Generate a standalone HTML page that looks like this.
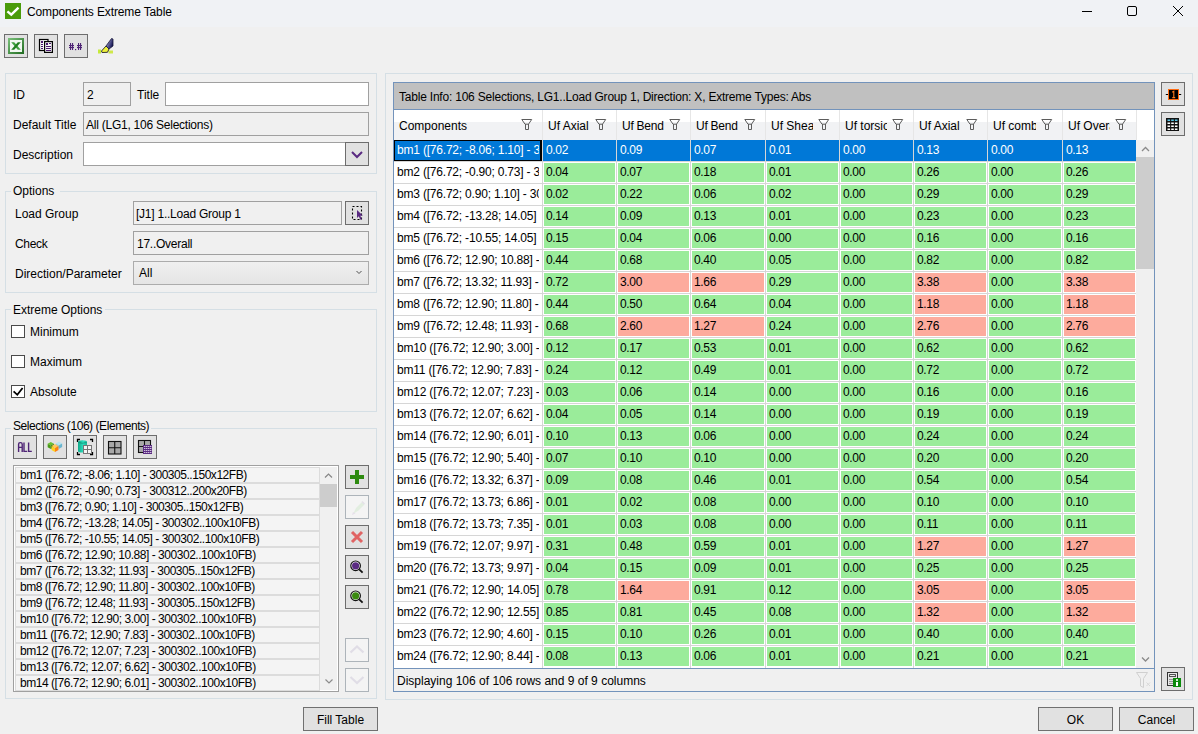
<!DOCTYPE html>
<html><head><meta charset="utf-8"><style>
html,body{margin:0;padding:0;background:#f0f0f0}
body{width:1198px;height:734px;overflow:hidden;position:relative;background:#f0f0f0;font-family:"Liberation Sans",sans-serif;font-size:12px;color:#000}
body>div,body>svg{position:absolute}
.t{white-space:nowrap;line-height:14px;height:14px}
</style></head><body>
<div style="left:0px;top:0px;width:1198px;height:27px;background:#f0f2f5"></div>
<svg style="left:5px;top:3px" width="16" height="16"><rect width="16" height="16" fill="#4a9b0b"/><path d="M2.4 8.3 L6.3 11.7 L13.5 4.6" stroke="#fff" stroke-width="2.4" fill="none"/></svg>
<div class="t" style="left:27px;top:5px;letter-spacing:-0.13px;">Components Extreme Table</div>
<svg style="left:1076px;top:0px" width="122" height="27"><path d="M6 11.5 H16" stroke="#000" stroke-width="1"/><rect x="51.5" y="6.5" width="9" height="9" rx="1.5" fill="none" stroke="#000" stroke-width="1"/><path d="M97 6 L107 16 M107 6 L97 16" stroke="#000" stroke-width="1"/></svg>
<div style="left:4px;top:34px;width:24px;height:24px;background:#e1e1e1;border:1px solid #6d6d6d;box-sizing:border-box"></div>
<div style="left:34px;top:34px;width:24px;height:24px;background:#e1e1e1;border:1px solid #6d6d6d;box-sizing:border-box"></div>
<div style="left:64px;top:34px;width:24px;height:24px;background:#e1e1e1;border:1px solid #6d6d6d;box-sizing:border-box"></div>
<svg style="left:8px;top:38px" width="16" height="16"><defs><linearGradient id="xg" x1="0" y1="0" x2="1" y2="1"><stop offset="0" stop-color="#7cc27c"/><stop offset="1" stop-color="#1f6a1f"/></linearGradient></defs><rect x="0" y="0" width="16" height="16" fill="url(#xg)"/><rect x="2" y="2" width="12" height="12" fill="#f2f8f2"/><path d="M3.2 4.2H6.2L12.8 11.8H9.8Z" fill="#3fa03f"/><path d="M9.8 4.2H12.8L6.2 11.8H3.2Z" fill="#1f7f1f"/></svg>
<svg style="left:36px;top:36px" width="20" height="20"><rect x="3.5" y="3.5" width="8.5" height="11" fill="#f4f4f4" stroke="#000" stroke-width="1.2"/><rect x="8.6" y="5.6" width="7.8" height="10.8" fill="#f4f4f4" stroke="#000" stroke-width="1.2"/><path d="M5 5h2v2h-2z M10 7h2v2h-2z" fill="#4b1a6e"/><path d="M5 8.5h2M5 10.5h2M5 12.5h2M13 7.5h2M10 10.5h5M10 12.5h5M10 14.5h5" stroke="#4b1a6e" stroke-width="1"/></svg>
<svg style="left:66px;top:40px" width="20" height="14" fill="#4e2475"><rect x="4" y="3" width="1.1" height="7"/><rect x="6" y="3" width="1.1" height="7"/><rect x="3" y="5" width="5" height="1.1"/><rect x="3" y="7" width="5" height="1.1"/><rect x="9" y="9" width="1.2" height="1.2"/><rect x="12" y="3" width="1.1" height="7"/><rect x="14" y="3" width="1.1" height="7"/><rect x="11" y="5" width="5" height="1.1"/><rect x="11" y="7" width="5" height="1.1"/></svg>
<svg style="left:95px;top:36px" width="20" height="20"><defs><linearGradient id="hg" x1="0" y1="0" x2="1" y2="0.6"><stop offset="0" stop-color="#b8b8e8"/><stop offset="1" stop-color="#101050"/></linearGradient></defs><rect x="3" y="13.5" width="3" height="4" fill="#c6ea3a"/><rect x="13.5" y="14.5" width="4.5" height="3" fill="#cfe84a"/><path d="M7 16.5L6.5 15L11 10L14 13L12.5 16.3Z" fill="#eef03a" stroke="#222" stroke-width="0.9"/><path d="M11 10L16.5 2.5L18 3L18 10L14 13Z" fill="url(#hg)" stroke="#1a1a3a" stroke-width="0.8"/></svg>
<div style="left:5px;top:73px;width:372px;height:101px;border:1px solid #d5dfe5;box-sizing:border-box"></div>
<div style="left:5px;top:191px;width:372px;height:102px;border:1px solid #d5dfe5;box-sizing:border-box"></div>
<div style="left:5px;top:309px;width:372px;height:103px;border:1px solid #d5dfe5;box-sizing:border-box"></div>
<div style="left:5px;top:428px;width:372px;height:271px;border:1px solid #d5dfe5;box-sizing:border-box"></div>
<div style="left:11px;top:181px;width:49px;height:16px;background:#f0f0f0"></div>
<div class="t" style="left:13px;top:184px;">Options</div>
<div style="left:11px;top:300px;width:94px;height:16px;background:#f0f0f0"></div>
<div class="t" style="left:13px;top:303px;">Extreme Options</div>
<div style="left:11px;top:416px;width:140px;height:16px;background:#f0f0f0"></div>
<div class="t" style="left:13px;top:419px;letter-spacing:-0.44px;">Selections (106) (Elements)</div>
<div class="t" style="left:13px;top:88px;">ID</div>
<div style="left:83px;top:82px;width:48px;height:24px;background:#f0f0f0;border:1px solid #a0a0a0;box-sizing:border-box"></div>
<div class="t" style="left:87px;top:88px;">2</div>
<div class="t" style="left:137px;top:88px;">Title</div>
<div style="left:165px;top:82px;width:204px;height:24px;background:#fff;border:1px solid #a0a0a0;box-sizing:border-box"></div>
<div class="t" style="left:13px;top:118px;">Default Title</div>
<div style="left:83px;top:112px;width:286px;height:24px;background:#f0f0f0;border:1px solid #a0a0a0;box-sizing:border-box"></div>
<div class="t" style="left:86px;top:118px;letter-spacing:-0.24px;">All (LG1, 106 Selections)</div>
<div class="t" style="left:13px;top:148px;">Description</div>
<div style="left:83px;top:142px;width:286px;height:24px;background:#fff;border:1px solid #a0a0a0;box-sizing:border-box"></div>
<div style="left:345px;top:142px;width:24px;height:24px;background:#e1e1e1;border:1px solid #6d6d6d;box-sizing:border-box"></div>
<svg style="left:345px;top:142px" width="24" height="24"><path d="M7 10 L12 15 L17 10" stroke="#5a2a82" stroke-width="2" fill="none"/></svg>
<div class="t" style="left:15px;top:207px;">Load Group</div>
<div style="left:133px;top:201px;width:209px;height:24px;background:#f0f0f0;border:1px solid #a0a0a0;box-sizing:border-box"></div>
<div class="t" style="left:136px;top:207px;letter-spacing:-0.24px;">[J1] 1..Load Group 1</div>
<div style="left:345px;top:201px;width:24px;height:24px;background:#e1e1e1;border:1px solid #6d6d6d;box-sizing:border-box"></div>
<svg style="left:345px;top:201px" width="24" height="24"><rect x="7.5" y="5.5" width="9" height="13" fill="none" stroke="#000" stroke-width="1.1" stroke-dasharray="2 2"/><path d="M12 9L12 17L13.8 15.3L15.3 18.8L16.8 18L15.3 14.8L17.8 14.5Z" fill="#5a2a82"/></svg>
<div class="t" style="left:15px;top:237px;letter-spacing:-0.3px;">Check</div>
<div style="left:133px;top:231px;width:236px;height:24px;background:#f0f0f0;border:1px solid #a0a0a0;box-sizing:border-box"></div>
<div class="t" style="left:137px;top:237px;letter-spacing:-0.25px;">17..Overall</div>
<div class="t" style="left:15px;top:267px;">Direction/Parameter</div>
<div style="left:133px;top:261px;width:236px;height:24px;background:linear-gradient(#f0f0f0,#e5e5e5);border:1px solid #acacac;box-sizing:border-box"></div>
<div class="t" style="left:139px;top:266px;">All</div>
<svg style="left:353px;top:268px" width="10" height="8"><path d="M3.5 3 L6 5.5 L8.5 3" stroke="#505050" stroke-width="1" fill="none"/></svg>
<div style="left:11px;top:325px;width:14px;height:13px;background:#fff;border:1px solid #4a4a4a;box-sizing:border-box"></div>
<div class="t" style="left:30px;top:325px;">Minimum</div>
<div style="left:11px;top:355px;width:14px;height:13px;background:#fff;border:1px solid #4a4a4a;box-sizing:border-box"></div>
<div class="t" style="left:30px;top:355px;">Maximum</div>
<div style="left:11px;top:385px;width:14px;height:13px;background:#fff;border:1px solid #4a4a4a;box-sizing:border-box"></div>
<svg style="left:11px;top:385px" width="14" height="13"><path d="M2.6 6.4 L6.3 9.8 L11.6 3" stroke="#000" stroke-width="1.8" fill="none"/></svg>
<div class="t" style="left:30px;top:385px;">Absolute</div>
<div style="left:13px;top:435px;width:24px;height:24px;background:#e1e1e1;border:1px solid #6d6d6d;box-sizing:border-box"></div>
<div style="left:43px;top:435px;width:24px;height:24px;background:#e1e1e1;border:1px solid #6d6d6d;box-sizing:border-box"></div>
<div style="left:73px;top:435px;width:24px;height:24px;background:#e1e1e1;border:1px solid #6d6d6d;box-sizing:border-box"></div>
<div style="left:103px;top:435px;width:24px;height:24px;background:#e1e1e1;border:1px solid #6d6d6d;box-sizing:border-box"></div>
<div style="left:133px;top:435px;width:24px;height:24px;background:#e1e1e1;border:1px solid #6d6d6d;box-sizing:border-box"></div>
<svg style="left:13px;top:435px" width="24" height="24"><path d="M5.6 17V9.2Q5.6 7.6 7.2 7.6H7.6Q9.2 7.6 9.2 9.2V17M5.6 12.4H9.2M11 7.5V16.4H14.2M15.6 7.5V16.4H18.8" fill="none" stroke="#4e2475" stroke-width="1.4"/></svg>
<svg style="left:43px;top:435px" width="24" height="24"><polygon points="7.80,6.90 10.93,8.70 7.80,10.50 4.67,8.70" fill="#6cc030"/><polygon points="4.67,8.70 7.80,10.50 7.80,14.10 4.67,12.30" fill="#4a9a18"/><polygon points="7.80,10.50 10.93,8.70 10.93,12.30 7.80,14.10" fill="#2f7a10"/><polygon points="16.00,6.60 19.13,8.40 16.00,10.20 12.87,8.40" fill="#b8e4f0"/><polygon points="12.87,8.40 16.00,10.20 16.00,13.80 12.87,12.00" fill="#90cce0"/><polygon points="16.00,10.20 19.13,8.40 19.13,12.00 16.00,13.80" fill="#6ab6d0"/><polygon points="12.00,9.00 15.48,11.00 12.00,13.00 8.52,11.00" fill="#ffc860"/><polygon points="8.52,11.00 12.00,13.00 12.00,17.00 8.52,15.00" fill="#ffd020"/><polygon points="12.00,13.00 15.48,11.00 15.48,15.00 12.00,17.00" fill="#ff8010"/></svg>
<svg style="left:73px;top:435px" width="24" height="24"><path d="M4.5 7V4.5H7M17 4.5H19.5V7M4.5 17V19.5H7M17 19.5H19.5V17" fill="none" stroke="#000" stroke-width="1.3"/><defs><linearGradient id="cyl" x1="0" x2="1"><stop offset="0" stop-color="#10a888"/><stop offset="0.6" stop-color="#30e0c0"/><stop offset="1" stop-color="#18b898"/></linearGradient></defs><path d="M5 7Q5 5.3 9.5 5.3Q14 5.3 14 7V16Q14 17.5 9.5 17.5Q5 17.5 5 16Z" fill="url(#cyl)"/><path d="M5.5 7.5Q9.5 9 13.5 7.5" stroke="#0a7a60" stroke-width="0.6" fill="none"/><rect x="10.5" y="10.5" width="8" height="8" fill="#f4f4f4" stroke="#777" stroke-width="1"/><path d="M14.5 10.5V18.5M10.5 14.5H18.5" stroke="#777" stroke-width="1"/></svg>
<svg style="left:103px;top:435px" width="24" height="24"><rect x="5.5" y="6.5" width="12.5" height="12.5" fill="#a8a8a8" stroke="#111" stroke-width="1.1"/><path d="M11.75 6.5V19M5.5 12.75H18" stroke="#111" stroke-width="1.1"/></svg>
<svg style="left:133px;top:435px" width="24" height="24"><rect x="5.5" y="5.5" width="12" height="12" fill="#a8a8a8" stroke="#111" stroke-width="1.1"/><path d="M11.5 5.5V17.5M5.5 11.5H17.5" stroke="#111" stroke-width="1.1"/><rect x="10" y="10" width="9" height="9" fill="#5a2a82"/><path d="M11.3 11.5h1M13.3 11.5h1M15.3 11.5h1M17.3 11.5h1M11.3 13.5h1M13.3 13.5h1M15.3 13.5h1M17.3 13.5h1M11.3 15.5h1M13.3 15.5h1M15.3 15.5h1M17.3 15.5h1M11.3 17.5h1M13.3 17.5h1M15.3 17.5h1M17.3 17.5h1" stroke="#fff" stroke-width="1"/></svg>
<div style="left:13px;top:465px;width:326px;height:227px;background:#fff;border:1px solid #a0a0a0;box-sizing:border-box"></div>
<div style="left:15px;top:467px;width:305px;height:16px;background:#f4f4f4;border:1px solid #dcdcdc;box-sizing:border-box"></div>
<div class="t" style="left:20px;top:468px;letter-spacing:-0.46px;">bm1 ([76.72; -8.06; 1.10] - 300305..150x12FB)</div>
<div style="left:15px;top:483px;width:305px;height:16px;background:#f4f4f4;border:1px solid #dcdcdc;box-sizing:border-box"></div>
<div class="t" style="left:20px;top:484px;letter-spacing:-0.46px;">bm2 ([76.72; -0.90; 0.73] - 300312..200x20FB)</div>
<div style="left:15px;top:499px;width:305px;height:16px;background:#f4f4f4;border:1px solid #dcdcdc;box-sizing:border-box"></div>
<div class="t" style="left:20px;top:500px;letter-spacing:-0.46px;">bm3 ([76.72; 0.90; 1.10] - 300305..150x12FB)</div>
<div style="left:15px;top:515px;width:305px;height:16px;background:#f4f4f4;border:1px solid #dcdcdc;box-sizing:border-box"></div>
<div class="t" style="left:20px;top:516px;letter-spacing:-0.46px;">bm4 ([76.72; -13.28; 14.05] - 300302..100x10FB)</div>
<div style="left:15px;top:531px;width:305px;height:16px;background:#f4f4f4;border:1px solid #dcdcdc;box-sizing:border-box"></div>
<div class="t" style="left:20px;top:532px;letter-spacing:-0.46px;">bm5 ([76.72; -10.55; 14.05] - 300302..100x10FB)</div>
<div style="left:15px;top:547px;width:305px;height:16px;background:#f4f4f4;border:1px solid #dcdcdc;box-sizing:border-box"></div>
<div class="t" style="left:20px;top:548px;letter-spacing:-0.46px;">bm6 ([76.72; 12.90; 10.88] - 300302..100x10FB)</div>
<div style="left:15px;top:563px;width:305px;height:16px;background:#f4f4f4;border:1px solid #dcdcdc;box-sizing:border-box"></div>
<div class="t" style="left:20px;top:564px;letter-spacing:-0.46px;">bm7 ([76.72; 13.32; 11.93] - 300305..150x12FB)</div>
<div style="left:15px;top:579px;width:305px;height:16px;background:#f4f4f4;border:1px solid #dcdcdc;box-sizing:border-box"></div>
<div class="t" style="left:20px;top:580px;letter-spacing:-0.46px;">bm8 ([76.72; 12.90; 11.80] - 300302..100x10FB)</div>
<div style="left:15px;top:595px;width:305px;height:16px;background:#f4f4f4;border:1px solid #dcdcdc;box-sizing:border-box"></div>
<div class="t" style="left:20px;top:596px;letter-spacing:-0.46px;">bm9 ([76.72; 12.48; 11.93] - 300305..150x12FB)</div>
<div style="left:15px;top:611px;width:305px;height:16px;background:#f4f4f4;border:1px solid #dcdcdc;box-sizing:border-box"></div>
<div class="t" style="left:20px;top:612px;letter-spacing:-0.46px;">bm10 ([76.72; 12.90; 3.00] - 300302..100x10FB)</div>
<div style="left:15px;top:627px;width:305px;height:16px;background:#f4f4f4;border:1px solid #dcdcdc;box-sizing:border-box"></div>
<div class="t" style="left:20px;top:628px;letter-spacing:-0.46px;">bm11 ([76.72; 12.90; 7.83] - 300302..100x10FB)</div>
<div style="left:15px;top:643px;width:305px;height:16px;background:#f4f4f4;border:1px solid #dcdcdc;box-sizing:border-box"></div>
<div class="t" style="left:20px;top:644px;letter-spacing:-0.46px;">bm12 ([76.72; 12.07; 7.23] - 300302..100x10FB)</div>
<div style="left:15px;top:659px;width:305px;height:16px;background:#f4f4f4;border:1px solid #dcdcdc;box-sizing:border-box"></div>
<div class="t" style="left:20px;top:660px;letter-spacing:-0.46px;">bm13 ([76.72; 12.07; 6.62] - 300302..100x10FB)</div>
<div style="left:15px;top:675px;width:305px;height:16px;background:#f4f4f4;border:1px solid #dcdcdc;box-sizing:border-box"></div>
<div class="t" style="left:20px;top:676px;letter-spacing:-0.46px;">bm14 ([76.72; 12.90; 6.01] - 300302..100x10FB)</div>
<div style="left:320px;top:467px;width:17px;height:223px;background:#f0f0f0"></div>
<div style="left:320px;top:484px;width:17px;height:23px;background:#cdcdcd"></div>
<svg style="left:320px;top:466px" width="17" height="17"><path d="M5 11.5 L8.5 8 L12 11.5" stroke="#868686" stroke-width="1.2" fill="none"/></svg>
<svg style="left:320px;top:673px" width="17" height="17"><path d="M5.5 6.5 L9 10 L12.5 6.5" stroke="#8c8c8c" stroke-width="1.2" fill="none"/></svg>
<div style="left:345px;top:465px;width:24px;height:24px;background:#e1e1e1;border:1px solid #6d6d6d;box-sizing:border-box"></div>
<svg style="left:345px;top:465px" width="24" height="24"><path d="M12 5V19M5 11.9H19" stroke="#2d8a0f" stroke-width="4"/></svg>
<div style="left:345px;top:495px;width:24px;height:24px;background:#f4f4f4;border:1px solid #adb4ba;box-sizing:border-box"></div>
<svg style="left:345px;top:495px" width="24" height="24"><path d="M8 19L11 13L17 7L19.5 9.5L13.5 15.5Z" fill="#e2eee0"/><path d="M7 20L8 17L10.5 18.5Z" fill="#e6e0ea"/><path d="M17 6.5L19.5 9" stroke="#e4e0e8" stroke-width="1.5"/></svg>
<div style="left:345px;top:525px;width:24px;height:24px;background:#e1e1e1;border:1px solid #6d6d6d;box-sizing:border-box"></div>
<svg style="left:345px;top:525px" width="24" height="24"><path d="M7 7L17 17M17 7L7 17" stroke="#e06464" stroke-width="3"/></svg>
<div style="left:345px;top:555px;width:24px;height:24px;background:#e1e1e1;border:1px solid #6d6d6d;box-sizing:border-box"></div>
<svg style="left:345px;top:555px" width="24" height="24"><circle cx="10.6" cy="10.8" r="4.8" fill="#fff" stroke="#111" stroke-width="1.2"/><circle cx="10.6" cy="10.8" r="3.6" fill="#5a2a82"/><path d="M14.2 14.4L17.6 17.6" stroke="#111" stroke-width="1.8"/></svg>
<div style="left:345px;top:585px;width:24px;height:24px;background:#e1e1e1;border:1px solid #6d6d6d;box-sizing:border-box"></div>
<svg style="left:345px;top:585px" width="24" height="24"><circle cx="10.6" cy="10.8" r="4.8" fill="#fff" stroke="#111" stroke-width="1.2"/><circle cx="10.6" cy="10.8" r="3.6" fill="#3a8a10"/><path d="M14.2 14.4L17.6 17.6" stroke="#111" stroke-width="1.8"/></svg>
<div style="left:345px;top:638px;width:24px;height:24px;background:#f4f4f4;border:1px solid #adb4ba;box-sizing:border-box"></div>
<svg style="left:345px;top:638px" width="24" height="24"><path d="M5.5 14.5L12 8.5L18.5 14.5" stroke="#e0dde6" stroke-width="2.2" fill="none"/></svg>
<div style="left:345px;top:668px;width:24px;height:24px;background:#f4f4f4;border:1px solid #adb4ba;box-sizing:border-box"></div>
<svg style="left:345px;top:668px" width="24" height="24"><path d="M5.5 9L12 15L18.5 9" stroke="#e0dde6" stroke-width="2.2" fill="none"/></svg>
<div style="left:303px;top:707px;width:75px;height:24px;background:#e1e1e1;border:1px solid #707070;box-sizing:border-box"></div>
<div class="t" style="left:303px;top:713px;width:75px;text-align:center;">Fill Table</div>
<div style="left:385px;top:73px;width:808px;height:627px;border:1px solid #d5dfe5;box-sizing:border-box"></div>
<div style="left:393px;top:82px;width:762px;height:610px;background:#fff;border:1px solid #7393bb;box-sizing:border-box"></div>
<div style="left:394px;top:83px;width:760px;height:26px;background:#c0c0c0"></div>
<div style="left:394px;top:109px;width:760px;height:1px;background:#7393bb"></div>
<div class="t" style="left:399px;top:90px;letter-spacing:-0.21px;">Table Info: 106 Selections, LG1..Load Group 1, Direction: X, Extreme Types: Abs</div>
<div style="left:394px;top:110px;width:743px;height:12px;background:#fff"></div>
<div style="left:394px;top:122px;width:743px;height:18px;background:#f1f2f4"></div>
<div class="t" style="left:399px;top:119px;width:117px;overflow:hidden;">Components</div>
<svg style="left:521px;top:119px" width="12" height="12"><path d="M0.8 0.5H10.7L7.5 5.2H4Z" fill="none" stroke="#5c5c5c" stroke-width="1"/><path d="M4.5 5V10.5H7.5V5" fill="none" stroke="#5c5c5c" stroke-width="1"/></svg>
<div style="left:542px;top:110px;width:1px;height:30px;background:#e6e6e6"></div>
<div class="t" style="left:548px;top:119px;width:42px;overflow:hidden;">Uf Axial</div>
<svg style="left:595px;top:119px" width="12" height="12"><path d="M0.8 0.5H10.7L7.5 5.2H4Z" fill="none" stroke="#5c5c5c" stroke-width="1"/><path d="M4.5 5V10.5H7.5V5" fill="none" stroke="#5c5c5c" stroke-width="1"/></svg>
<div style="left:616px;top:110px;width:1px;height:30px;background:#e6e6e6"></div>
<div class="t" style="left:622px;top:119px;width:42px;overflow:hidden;letter-spacing:-0.25px;">Uf Bend</div>
<svg style="left:669px;top:119px" width="12" height="12"><path d="M0.8 0.5H10.7L7.5 5.2H4Z" fill="none" stroke="#5c5c5c" stroke-width="1"/><path d="M4.5 5V10.5H7.5V5" fill="none" stroke="#5c5c5c" stroke-width="1"/></svg>
<div style="left:690px;top:110px;width:1px;height:30px;background:#e6e6e6"></div>
<div class="t" style="left:696px;top:119px;width:43px;overflow:hidden;letter-spacing:-0.25px;">Uf Bend</div>
<svg style="left:744px;top:119px" width="12" height="12"><path d="M0.8 0.5H10.7L7.5 5.2H4Z" fill="none" stroke="#5c5c5c" stroke-width="1"/><path d="M4.5 5V10.5H7.5V5" fill="none" stroke="#5c5c5c" stroke-width="1"/></svg>
<div style="left:765px;top:110px;width:1px;height:30px;background:#e6e6e6"></div>
<div class="t" style="left:771px;top:119px;width:42px;overflow:hidden;">Uf Shear</div>
<svg style="left:818px;top:119px" width="12" height="12"><path d="M0.8 0.5H10.7L7.5 5.2H4Z" fill="none" stroke="#5c5c5c" stroke-width="1"/><path d="M4.5 5V10.5H7.5V5" fill="none" stroke="#5c5c5c" stroke-width="1"/></svg>
<div style="left:839px;top:110px;width:1px;height:30px;background:#e6e6e6"></div>
<div class="t" style="left:845px;top:119px;width:42px;overflow:hidden;">Uf torsion</div>
<svg style="left:892px;top:119px" width="12" height="12"><path d="M0.8 0.5H10.7L7.5 5.2H4Z" fill="none" stroke="#5c5c5c" stroke-width="1"/><path d="M4.5 5V10.5H7.5V5" fill="none" stroke="#5c5c5c" stroke-width="1"/></svg>
<div style="left:913px;top:110px;width:1px;height:30px;background:#e6e6e6"></div>
<div class="t" style="left:919px;top:119px;width:42px;overflow:hidden;">Uf Axial</div>
<svg style="left:966px;top:119px" width="12" height="12"><path d="M0.8 0.5H10.7L7.5 5.2H4Z" fill="none" stroke="#5c5c5c" stroke-width="1"/><path d="M4.5 5V10.5H7.5V5" fill="none" stroke="#5c5c5c" stroke-width="1"/></svg>
<div style="left:987px;top:110px;width:1px;height:30px;background:#e6e6e6"></div>
<div class="t" style="left:993px;top:119px;width:43px;overflow:hidden;">Uf combined</div>
<svg style="left:1041px;top:119px" width="12" height="12"><path d="M0.8 0.5H10.7L7.5 5.2H4Z" fill="none" stroke="#5c5c5c" stroke-width="1"/><path d="M4.5 5V10.5H7.5V5" fill="none" stroke="#5c5c5c" stroke-width="1"/></svg>
<div style="left:1062px;top:110px;width:1px;height:30px;background:#e6e6e6"></div>
<div class="t" style="left:1068px;top:119px;width:42px;overflow:hidden;">Uf Overall</div>
<svg style="left:1115px;top:119px" width="12" height="12"><path d="M0.8 0.5H10.7L7.5 5.2H4Z" fill="none" stroke="#5c5c5c" stroke-width="1"/><path d="M4.5 5V10.5H7.5V5" fill="none" stroke="#5c5c5c" stroke-width="1"/></svg>
<div style="left:1136px;top:110px;width:1px;height:30px;background:#e6e6e6"></div>
<div style="left:394px;top:140px;width:742px;height:21px;background:#0078d7"></div>
<div style="left:394px;top:140px;width:148px;height:21px;border:1px solid #000;border-right-width:2px;box-sizing:border-box"></div>
<div class="t" style="left:397px;top:143px;width:142px;overflow:hidden;letter-spacing:-0.2px;color:#fff">bm1 ([76.72; -8.06; 1.10] - 300305..150x12FB)</div>
<div class="t" style="left:546px;top:143px;letter-spacing:-0.35px;color:#fff">0.02</div>
<div class="t" style="left:620px;top:143px;letter-spacing:-0.35px;color:#fff">0.09</div>
<div class="t" style="left:694px;top:143px;letter-spacing:-0.35px;color:#fff">0.07</div>
<div class="t" style="left:769px;top:143px;letter-spacing:-0.35px;color:#fff">0.01</div>
<div class="t" style="left:843px;top:143px;letter-spacing:-0.35px;color:#fff">0.00</div>
<div class="t" style="left:917px;top:143px;letter-spacing:-0.35px;color:#fff">0.13</div>
<div class="t" style="left:991px;top:143px;letter-spacing:-0.35px;color:#fff">0.00</div>
<div class="t" style="left:1066px;top:143px;letter-spacing:-0.35px;color:#fff">0.13</div>
<div style="left:394px;top:161px;width:742px;height:1px;background:#d6d6d6"></div>
<div class="t" style="left:397px;top:165px;width:142px;overflow:hidden;letter-spacing:-0.2px;color:#000">bm2 ([76.72; -0.90; 0.73] - 300312..200x20FB)</div>
<div style="left:544px;top:163px;width:71px;height:19px;background:#9aec9a"></div>
<div class="t" style="left:546px;top:165px;letter-spacing:-0.35px;color:#000">0.04</div>
<div style="left:618px;top:163px;width:71px;height:19px;background:#9aec9a"></div>
<div class="t" style="left:620px;top:165px;letter-spacing:-0.35px;color:#000">0.07</div>
<div style="left:692px;top:163px;width:72px;height:19px;background:#9aec9a"></div>
<div class="t" style="left:694px;top:165px;letter-spacing:-0.35px;color:#000">0.18</div>
<div style="left:767px;top:163px;width:71px;height:19px;background:#9aec9a"></div>
<div class="t" style="left:769px;top:165px;letter-spacing:-0.35px;color:#000">0.01</div>
<div style="left:841px;top:163px;width:71px;height:19px;background:#9aec9a"></div>
<div class="t" style="left:843px;top:165px;letter-spacing:-0.35px;color:#000">0.00</div>
<div style="left:915px;top:163px;width:71px;height:19px;background:#9aec9a"></div>
<div class="t" style="left:917px;top:165px;letter-spacing:-0.35px;color:#000">0.26</div>
<div style="left:989px;top:163px;width:72px;height:19px;background:#9aec9a"></div>
<div class="t" style="left:991px;top:165px;letter-spacing:-0.35px;color:#000">0.00</div>
<div style="left:1064px;top:163px;width:71px;height:19px;background:#9aec9a"></div>
<div class="t" style="left:1066px;top:165px;letter-spacing:-0.35px;color:#000">0.26</div>
<div style="left:394px;top:183px;width:742px;height:1px;background:#d6d6d6"></div>
<div class="t" style="left:397px;top:187px;width:142px;overflow:hidden;letter-spacing:-0.2px;color:#000">bm3 ([76.72; 0.90; 1.10] - 300305..150x12FB)</div>
<div style="left:544px;top:185px;width:71px;height:19px;background:#9aec9a"></div>
<div class="t" style="left:546px;top:187px;letter-spacing:-0.35px;color:#000">0.02</div>
<div style="left:618px;top:185px;width:71px;height:19px;background:#9aec9a"></div>
<div class="t" style="left:620px;top:187px;letter-spacing:-0.35px;color:#000">0.22</div>
<div style="left:692px;top:185px;width:72px;height:19px;background:#9aec9a"></div>
<div class="t" style="left:694px;top:187px;letter-spacing:-0.35px;color:#000">0.06</div>
<div style="left:767px;top:185px;width:71px;height:19px;background:#9aec9a"></div>
<div class="t" style="left:769px;top:187px;letter-spacing:-0.35px;color:#000">0.02</div>
<div style="left:841px;top:185px;width:71px;height:19px;background:#9aec9a"></div>
<div class="t" style="left:843px;top:187px;letter-spacing:-0.35px;color:#000">0.00</div>
<div style="left:915px;top:185px;width:71px;height:19px;background:#9aec9a"></div>
<div class="t" style="left:917px;top:187px;letter-spacing:-0.35px;color:#000">0.29</div>
<div style="left:989px;top:185px;width:72px;height:19px;background:#9aec9a"></div>
<div class="t" style="left:991px;top:187px;letter-spacing:-0.35px;color:#000">0.00</div>
<div style="left:1064px;top:185px;width:71px;height:19px;background:#9aec9a"></div>
<div class="t" style="left:1066px;top:187px;letter-spacing:-0.35px;color:#000">0.29</div>
<div style="left:394px;top:205px;width:742px;height:1px;background:#d6d6d6"></div>
<div class="t" style="left:397px;top:209px;width:142px;overflow:hidden;letter-spacing:-0.2px;color:#000">bm4 ([76.72; -13.28; 14.05] - 300302..100x10FB)</div>
<div style="left:544px;top:207px;width:71px;height:19px;background:#9aec9a"></div>
<div class="t" style="left:546px;top:209px;letter-spacing:-0.35px;color:#000">0.14</div>
<div style="left:618px;top:207px;width:71px;height:19px;background:#9aec9a"></div>
<div class="t" style="left:620px;top:209px;letter-spacing:-0.35px;color:#000">0.09</div>
<div style="left:692px;top:207px;width:72px;height:19px;background:#9aec9a"></div>
<div class="t" style="left:694px;top:209px;letter-spacing:-0.35px;color:#000">0.13</div>
<div style="left:767px;top:207px;width:71px;height:19px;background:#9aec9a"></div>
<div class="t" style="left:769px;top:209px;letter-spacing:-0.35px;color:#000">0.01</div>
<div style="left:841px;top:207px;width:71px;height:19px;background:#9aec9a"></div>
<div class="t" style="left:843px;top:209px;letter-spacing:-0.35px;color:#000">0.00</div>
<div style="left:915px;top:207px;width:71px;height:19px;background:#9aec9a"></div>
<div class="t" style="left:917px;top:209px;letter-spacing:-0.35px;color:#000">0.23</div>
<div style="left:989px;top:207px;width:72px;height:19px;background:#9aec9a"></div>
<div class="t" style="left:991px;top:209px;letter-spacing:-0.35px;color:#000">0.00</div>
<div style="left:1064px;top:207px;width:71px;height:19px;background:#9aec9a"></div>
<div class="t" style="left:1066px;top:209px;letter-spacing:-0.35px;color:#000">0.23</div>
<div style="left:394px;top:227px;width:742px;height:1px;background:#d6d6d6"></div>
<div class="t" style="left:397px;top:231px;width:142px;overflow:hidden;letter-spacing:-0.2px;color:#000">bm5 ([76.72; -10.55; 14.05] - 300302..100x10FB)</div>
<div style="left:544px;top:229px;width:71px;height:19px;background:#9aec9a"></div>
<div class="t" style="left:546px;top:231px;letter-spacing:-0.35px;color:#000">0.15</div>
<div style="left:618px;top:229px;width:71px;height:19px;background:#9aec9a"></div>
<div class="t" style="left:620px;top:231px;letter-spacing:-0.35px;color:#000">0.04</div>
<div style="left:692px;top:229px;width:72px;height:19px;background:#9aec9a"></div>
<div class="t" style="left:694px;top:231px;letter-spacing:-0.35px;color:#000">0.06</div>
<div style="left:767px;top:229px;width:71px;height:19px;background:#9aec9a"></div>
<div class="t" style="left:769px;top:231px;letter-spacing:-0.35px;color:#000">0.00</div>
<div style="left:841px;top:229px;width:71px;height:19px;background:#9aec9a"></div>
<div class="t" style="left:843px;top:231px;letter-spacing:-0.35px;color:#000">0.00</div>
<div style="left:915px;top:229px;width:71px;height:19px;background:#9aec9a"></div>
<div class="t" style="left:917px;top:231px;letter-spacing:-0.35px;color:#000">0.16</div>
<div style="left:989px;top:229px;width:72px;height:19px;background:#9aec9a"></div>
<div class="t" style="left:991px;top:231px;letter-spacing:-0.35px;color:#000">0.00</div>
<div style="left:1064px;top:229px;width:71px;height:19px;background:#9aec9a"></div>
<div class="t" style="left:1066px;top:231px;letter-spacing:-0.35px;color:#000">0.16</div>
<div style="left:394px;top:249px;width:742px;height:1px;background:#d6d6d6"></div>
<div class="t" style="left:397px;top:253px;width:142px;overflow:hidden;letter-spacing:-0.2px;color:#000">bm6 ([76.72; 12.90; 10.88] - 300302..100x10FB)</div>
<div style="left:544px;top:251px;width:71px;height:19px;background:#9aec9a"></div>
<div class="t" style="left:546px;top:253px;letter-spacing:-0.35px;color:#000">0.44</div>
<div style="left:618px;top:251px;width:71px;height:19px;background:#9aec9a"></div>
<div class="t" style="left:620px;top:253px;letter-spacing:-0.35px;color:#000">0.68</div>
<div style="left:692px;top:251px;width:72px;height:19px;background:#9aec9a"></div>
<div class="t" style="left:694px;top:253px;letter-spacing:-0.35px;color:#000">0.40</div>
<div style="left:767px;top:251px;width:71px;height:19px;background:#9aec9a"></div>
<div class="t" style="left:769px;top:253px;letter-spacing:-0.35px;color:#000">0.05</div>
<div style="left:841px;top:251px;width:71px;height:19px;background:#9aec9a"></div>
<div class="t" style="left:843px;top:253px;letter-spacing:-0.35px;color:#000">0.00</div>
<div style="left:915px;top:251px;width:71px;height:19px;background:#9aec9a"></div>
<div class="t" style="left:917px;top:253px;letter-spacing:-0.35px;color:#000">0.82</div>
<div style="left:989px;top:251px;width:72px;height:19px;background:#9aec9a"></div>
<div class="t" style="left:991px;top:253px;letter-spacing:-0.35px;color:#000">0.00</div>
<div style="left:1064px;top:251px;width:71px;height:19px;background:#9aec9a"></div>
<div class="t" style="left:1066px;top:253px;letter-spacing:-0.35px;color:#000">0.82</div>
<div style="left:394px;top:271px;width:742px;height:1px;background:#d6d6d6"></div>
<div class="t" style="left:397px;top:275px;width:142px;overflow:hidden;letter-spacing:-0.2px;color:#000">bm7 ([76.72; 13.32; 11.93] - 300305..150x12FB)</div>
<div style="left:544px;top:273px;width:71px;height:19px;background:#9aec9a"></div>
<div class="t" style="left:546px;top:275px;letter-spacing:-0.35px;color:#000">0.72</div>
<div style="left:618px;top:273px;width:71px;height:19px;background:#fdab9d"></div>
<div class="t" style="left:620px;top:275px;letter-spacing:-0.35px;color:#000">3.00</div>
<div style="left:692px;top:273px;width:72px;height:19px;background:#fdab9d"></div>
<div class="t" style="left:694px;top:275px;letter-spacing:-0.35px;color:#000">1.66</div>
<div style="left:767px;top:273px;width:71px;height:19px;background:#9aec9a"></div>
<div class="t" style="left:769px;top:275px;letter-spacing:-0.35px;color:#000">0.29</div>
<div style="left:841px;top:273px;width:71px;height:19px;background:#9aec9a"></div>
<div class="t" style="left:843px;top:275px;letter-spacing:-0.35px;color:#000">0.00</div>
<div style="left:915px;top:273px;width:71px;height:19px;background:#fdab9d"></div>
<div class="t" style="left:917px;top:275px;letter-spacing:-0.35px;color:#000">3.38</div>
<div style="left:989px;top:273px;width:72px;height:19px;background:#9aec9a"></div>
<div class="t" style="left:991px;top:275px;letter-spacing:-0.35px;color:#000">0.00</div>
<div style="left:1064px;top:273px;width:71px;height:19px;background:#fdab9d"></div>
<div class="t" style="left:1066px;top:275px;letter-spacing:-0.35px;color:#000">3.38</div>
<div style="left:394px;top:293px;width:742px;height:1px;background:#d6d6d6"></div>
<div class="t" style="left:397px;top:297px;width:142px;overflow:hidden;letter-spacing:-0.2px;color:#000">bm8 ([76.72; 12.90; 11.80] - 300302..100x10FB)</div>
<div style="left:544px;top:295px;width:71px;height:19px;background:#9aec9a"></div>
<div class="t" style="left:546px;top:297px;letter-spacing:-0.35px;color:#000">0.44</div>
<div style="left:618px;top:295px;width:71px;height:19px;background:#9aec9a"></div>
<div class="t" style="left:620px;top:297px;letter-spacing:-0.35px;color:#000">0.50</div>
<div style="left:692px;top:295px;width:72px;height:19px;background:#9aec9a"></div>
<div class="t" style="left:694px;top:297px;letter-spacing:-0.35px;color:#000">0.64</div>
<div style="left:767px;top:295px;width:71px;height:19px;background:#9aec9a"></div>
<div class="t" style="left:769px;top:297px;letter-spacing:-0.35px;color:#000">0.04</div>
<div style="left:841px;top:295px;width:71px;height:19px;background:#9aec9a"></div>
<div class="t" style="left:843px;top:297px;letter-spacing:-0.35px;color:#000">0.00</div>
<div style="left:915px;top:295px;width:71px;height:19px;background:#fdab9d"></div>
<div class="t" style="left:917px;top:297px;letter-spacing:-0.35px;color:#000">1.18</div>
<div style="left:989px;top:295px;width:72px;height:19px;background:#9aec9a"></div>
<div class="t" style="left:991px;top:297px;letter-spacing:-0.35px;color:#000">0.00</div>
<div style="left:1064px;top:295px;width:71px;height:19px;background:#fdab9d"></div>
<div class="t" style="left:1066px;top:297px;letter-spacing:-0.35px;color:#000">1.18</div>
<div style="left:394px;top:315px;width:742px;height:1px;background:#d6d6d6"></div>
<div class="t" style="left:397px;top:319px;width:142px;overflow:hidden;letter-spacing:-0.2px;color:#000">bm9 ([76.72; 12.48; 11.93] - 300305..150x12FB)</div>
<div style="left:544px;top:317px;width:71px;height:19px;background:#9aec9a"></div>
<div class="t" style="left:546px;top:319px;letter-spacing:-0.35px;color:#000">0.68</div>
<div style="left:618px;top:317px;width:71px;height:19px;background:#fdab9d"></div>
<div class="t" style="left:620px;top:319px;letter-spacing:-0.35px;color:#000">2.60</div>
<div style="left:692px;top:317px;width:72px;height:19px;background:#fdab9d"></div>
<div class="t" style="left:694px;top:319px;letter-spacing:-0.35px;color:#000">1.27</div>
<div style="left:767px;top:317px;width:71px;height:19px;background:#9aec9a"></div>
<div class="t" style="left:769px;top:319px;letter-spacing:-0.35px;color:#000">0.24</div>
<div style="left:841px;top:317px;width:71px;height:19px;background:#9aec9a"></div>
<div class="t" style="left:843px;top:319px;letter-spacing:-0.35px;color:#000">0.00</div>
<div style="left:915px;top:317px;width:71px;height:19px;background:#fdab9d"></div>
<div class="t" style="left:917px;top:319px;letter-spacing:-0.35px;color:#000">2.76</div>
<div style="left:989px;top:317px;width:72px;height:19px;background:#9aec9a"></div>
<div class="t" style="left:991px;top:319px;letter-spacing:-0.35px;color:#000">0.00</div>
<div style="left:1064px;top:317px;width:71px;height:19px;background:#fdab9d"></div>
<div class="t" style="left:1066px;top:319px;letter-spacing:-0.35px;color:#000">2.76</div>
<div style="left:394px;top:337px;width:742px;height:1px;background:#d6d6d6"></div>
<div class="t" style="left:397px;top:341px;width:142px;overflow:hidden;letter-spacing:-0.2px;color:#000">bm10 ([76.72; 12.90; 3.00] - 300302..100x10FB)</div>
<div style="left:544px;top:339px;width:71px;height:19px;background:#9aec9a"></div>
<div class="t" style="left:546px;top:341px;letter-spacing:-0.35px;color:#000">0.12</div>
<div style="left:618px;top:339px;width:71px;height:19px;background:#9aec9a"></div>
<div class="t" style="left:620px;top:341px;letter-spacing:-0.35px;color:#000">0.17</div>
<div style="left:692px;top:339px;width:72px;height:19px;background:#9aec9a"></div>
<div class="t" style="left:694px;top:341px;letter-spacing:-0.35px;color:#000">0.53</div>
<div style="left:767px;top:339px;width:71px;height:19px;background:#9aec9a"></div>
<div class="t" style="left:769px;top:341px;letter-spacing:-0.35px;color:#000">0.01</div>
<div style="left:841px;top:339px;width:71px;height:19px;background:#9aec9a"></div>
<div class="t" style="left:843px;top:341px;letter-spacing:-0.35px;color:#000">0.00</div>
<div style="left:915px;top:339px;width:71px;height:19px;background:#9aec9a"></div>
<div class="t" style="left:917px;top:341px;letter-spacing:-0.35px;color:#000">0.62</div>
<div style="left:989px;top:339px;width:72px;height:19px;background:#9aec9a"></div>
<div class="t" style="left:991px;top:341px;letter-spacing:-0.35px;color:#000">0.00</div>
<div style="left:1064px;top:339px;width:71px;height:19px;background:#9aec9a"></div>
<div class="t" style="left:1066px;top:341px;letter-spacing:-0.35px;color:#000">0.62</div>
<div style="left:394px;top:359px;width:742px;height:1px;background:#d6d6d6"></div>
<div class="t" style="left:397px;top:363px;width:142px;overflow:hidden;letter-spacing:-0.2px;color:#000">bm11 ([76.72; 12.90; 7.83] - 300302..100x10FB)</div>
<div style="left:544px;top:361px;width:71px;height:19px;background:#9aec9a"></div>
<div class="t" style="left:546px;top:363px;letter-spacing:-0.35px;color:#000">0.24</div>
<div style="left:618px;top:361px;width:71px;height:19px;background:#9aec9a"></div>
<div class="t" style="left:620px;top:363px;letter-spacing:-0.35px;color:#000">0.12</div>
<div style="left:692px;top:361px;width:72px;height:19px;background:#9aec9a"></div>
<div class="t" style="left:694px;top:363px;letter-spacing:-0.35px;color:#000">0.49</div>
<div style="left:767px;top:361px;width:71px;height:19px;background:#9aec9a"></div>
<div class="t" style="left:769px;top:363px;letter-spacing:-0.35px;color:#000">0.01</div>
<div style="left:841px;top:361px;width:71px;height:19px;background:#9aec9a"></div>
<div class="t" style="left:843px;top:363px;letter-spacing:-0.35px;color:#000">0.00</div>
<div style="left:915px;top:361px;width:71px;height:19px;background:#9aec9a"></div>
<div class="t" style="left:917px;top:363px;letter-spacing:-0.35px;color:#000">0.72</div>
<div style="left:989px;top:361px;width:72px;height:19px;background:#9aec9a"></div>
<div class="t" style="left:991px;top:363px;letter-spacing:-0.35px;color:#000">0.00</div>
<div style="left:1064px;top:361px;width:71px;height:19px;background:#9aec9a"></div>
<div class="t" style="left:1066px;top:363px;letter-spacing:-0.35px;color:#000">0.72</div>
<div style="left:394px;top:381px;width:742px;height:1px;background:#d6d6d6"></div>
<div class="t" style="left:397px;top:385px;width:142px;overflow:hidden;letter-spacing:-0.2px;color:#000">bm12 ([76.72; 12.07; 7.23] - 300302..100x10FB)</div>
<div style="left:544px;top:383px;width:71px;height:19px;background:#9aec9a"></div>
<div class="t" style="left:546px;top:385px;letter-spacing:-0.35px;color:#000">0.03</div>
<div style="left:618px;top:383px;width:71px;height:19px;background:#9aec9a"></div>
<div class="t" style="left:620px;top:385px;letter-spacing:-0.35px;color:#000">0.06</div>
<div style="left:692px;top:383px;width:72px;height:19px;background:#9aec9a"></div>
<div class="t" style="left:694px;top:385px;letter-spacing:-0.35px;color:#000">0.14</div>
<div style="left:767px;top:383px;width:71px;height:19px;background:#9aec9a"></div>
<div class="t" style="left:769px;top:385px;letter-spacing:-0.35px;color:#000">0.00</div>
<div style="left:841px;top:383px;width:71px;height:19px;background:#9aec9a"></div>
<div class="t" style="left:843px;top:385px;letter-spacing:-0.35px;color:#000">0.00</div>
<div style="left:915px;top:383px;width:71px;height:19px;background:#9aec9a"></div>
<div class="t" style="left:917px;top:385px;letter-spacing:-0.35px;color:#000">0.16</div>
<div style="left:989px;top:383px;width:72px;height:19px;background:#9aec9a"></div>
<div class="t" style="left:991px;top:385px;letter-spacing:-0.35px;color:#000">0.00</div>
<div style="left:1064px;top:383px;width:71px;height:19px;background:#9aec9a"></div>
<div class="t" style="left:1066px;top:385px;letter-spacing:-0.35px;color:#000">0.16</div>
<div style="left:394px;top:403px;width:742px;height:1px;background:#d6d6d6"></div>
<div class="t" style="left:397px;top:407px;width:142px;overflow:hidden;letter-spacing:-0.2px;color:#000">bm13 ([76.72; 12.07; 6.62] - 300302..100x10FB)</div>
<div style="left:544px;top:405px;width:71px;height:19px;background:#9aec9a"></div>
<div class="t" style="left:546px;top:407px;letter-spacing:-0.35px;color:#000">0.04</div>
<div style="left:618px;top:405px;width:71px;height:19px;background:#9aec9a"></div>
<div class="t" style="left:620px;top:407px;letter-spacing:-0.35px;color:#000">0.05</div>
<div style="left:692px;top:405px;width:72px;height:19px;background:#9aec9a"></div>
<div class="t" style="left:694px;top:407px;letter-spacing:-0.35px;color:#000">0.14</div>
<div style="left:767px;top:405px;width:71px;height:19px;background:#9aec9a"></div>
<div class="t" style="left:769px;top:407px;letter-spacing:-0.35px;color:#000">0.00</div>
<div style="left:841px;top:405px;width:71px;height:19px;background:#9aec9a"></div>
<div class="t" style="left:843px;top:407px;letter-spacing:-0.35px;color:#000">0.00</div>
<div style="left:915px;top:405px;width:71px;height:19px;background:#9aec9a"></div>
<div class="t" style="left:917px;top:407px;letter-spacing:-0.35px;color:#000">0.19</div>
<div style="left:989px;top:405px;width:72px;height:19px;background:#9aec9a"></div>
<div class="t" style="left:991px;top:407px;letter-spacing:-0.35px;color:#000">0.00</div>
<div style="left:1064px;top:405px;width:71px;height:19px;background:#9aec9a"></div>
<div class="t" style="left:1066px;top:407px;letter-spacing:-0.35px;color:#000">0.19</div>
<div style="left:394px;top:425px;width:742px;height:1px;background:#d6d6d6"></div>
<div class="t" style="left:397px;top:429px;width:142px;overflow:hidden;letter-spacing:-0.2px;color:#000">bm14 ([76.72; 12.90; 6.01] - 300302..100x10FB)</div>
<div style="left:544px;top:427px;width:71px;height:19px;background:#9aec9a"></div>
<div class="t" style="left:546px;top:429px;letter-spacing:-0.35px;color:#000">0.10</div>
<div style="left:618px;top:427px;width:71px;height:19px;background:#9aec9a"></div>
<div class="t" style="left:620px;top:429px;letter-spacing:-0.35px;color:#000">0.13</div>
<div style="left:692px;top:427px;width:72px;height:19px;background:#9aec9a"></div>
<div class="t" style="left:694px;top:429px;letter-spacing:-0.35px;color:#000">0.06</div>
<div style="left:767px;top:427px;width:71px;height:19px;background:#9aec9a"></div>
<div class="t" style="left:769px;top:429px;letter-spacing:-0.35px;color:#000">0.00</div>
<div style="left:841px;top:427px;width:71px;height:19px;background:#9aec9a"></div>
<div class="t" style="left:843px;top:429px;letter-spacing:-0.35px;color:#000">0.00</div>
<div style="left:915px;top:427px;width:71px;height:19px;background:#9aec9a"></div>
<div class="t" style="left:917px;top:429px;letter-spacing:-0.35px;color:#000">0.24</div>
<div style="left:989px;top:427px;width:72px;height:19px;background:#9aec9a"></div>
<div class="t" style="left:991px;top:429px;letter-spacing:-0.35px;color:#000">0.00</div>
<div style="left:1064px;top:427px;width:71px;height:19px;background:#9aec9a"></div>
<div class="t" style="left:1066px;top:429px;letter-spacing:-0.35px;color:#000">0.24</div>
<div style="left:394px;top:447px;width:742px;height:1px;background:#d6d6d6"></div>
<div class="t" style="left:397px;top:451px;width:142px;overflow:hidden;letter-spacing:-0.2px;color:#000">bm15 ([76.72; 12.90; 5.40] - 300302..100x10FB)</div>
<div style="left:544px;top:449px;width:71px;height:19px;background:#9aec9a"></div>
<div class="t" style="left:546px;top:451px;letter-spacing:-0.35px;color:#000">0.07</div>
<div style="left:618px;top:449px;width:71px;height:19px;background:#9aec9a"></div>
<div class="t" style="left:620px;top:451px;letter-spacing:-0.35px;color:#000">0.10</div>
<div style="left:692px;top:449px;width:72px;height:19px;background:#9aec9a"></div>
<div class="t" style="left:694px;top:451px;letter-spacing:-0.35px;color:#000">0.10</div>
<div style="left:767px;top:449px;width:71px;height:19px;background:#9aec9a"></div>
<div class="t" style="left:769px;top:451px;letter-spacing:-0.35px;color:#000">0.00</div>
<div style="left:841px;top:449px;width:71px;height:19px;background:#9aec9a"></div>
<div class="t" style="left:843px;top:451px;letter-spacing:-0.35px;color:#000">0.00</div>
<div style="left:915px;top:449px;width:71px;height:19px;background:#9aec9a"></div>
<div class="t" style="left:917px;top:451px;letter-spacing:-0.35px;color:#000">0.20</div>
<div style="left:989px;top:449px;width:72px;height:19px;background:#9aec9a"></div>
<div class="t" style="left:991px;top:451px;letter-spacing:-0.35px;color:#000">0.00</div>
<div style="left:1064px;top:449px;width:71px;height:19px;background:#9aec9a"></div>
<div class="t" style="left:1066px;top:451px;letter-spacing:-0.35px;color:#000">0.20</div>
<div style="left:394px;top:469px;width:742px;height:1px;background:#d6d6d6"></div>
<div class="t" style="left:397px;top:473px;width:142px;overflow:hidden;letter-spacing:-0.2px;color:#000">bm16 ([76.72; 13.32; 6.37] - 300305..150x12FB)</div>
<div style="left:544px;top:471px;width:71px;height:19px;background:#9aec9a"></div>
<div class="t" style="left:546px;top:473px;letter-spacing:-0.35px;color:#000">0.09</div>
<div style="left:618px;top:471px;width:71px;height:19px;background:#9aec9a"></div>
<div class="t" style="left:620px;top:473px;letter-spacing:-0.35px;color:#000">0.08</div>
<div style="left:692px;top:471px;width:72px;height:19px;background:#9aec9a"></div>
<div class="t" style="left:694px;top:473px;letter-spacing:-0.35px;color:#000">0.46</div>
<div style="left:767px;top:471px;width:71px;height:19px;background:#9aec9a"></div>
<div class="t" style="left:769px;top:473px;letter-spacing:-0.35px;color:#000">0.01</div>
<div style="left:841px;top:471px;width:71px;height:19px;background:#9aec9a"></div>
<div class="t" style="left:843px;top:473px;letter-spacing:-0.35px;color:#000">0.00</div>
<div style="left:915px;top:471px;width:71px;height:19px;background:#9aec9a"></div>
<div class="t" style="left:917px;top:473px;letter-spacing:-0.35px;color:#000">0.54</div>
<div style="left:989px;top:471px;width:72px;height:19px;background:#9aec9a"></div>
<div class="t" style="left:991px;top:473px;letter-spacing:-0.35px;color:#000">0.00</div>
<div style="left:1064px;top:471px;width:71px;height:19px;background:#9aec9a"></div>
<div class="t" style="left:1066px;top:473px;letter-spacing:-0.35px;color:#000">0.54</div>
<div style="left:394px;top:491px;width:742px;height:1px;background:#d6d6d6"></div>
<div class="t" style="left:397px;top:495px;width:142px;overflow:hidden;letter-spacing:-0.2px;color:#000">bm17 ([76.72; 13.73; 6.86] - 300302..100x10FB)</div>
<div style="left:544px;top:493px;width:71px;height:19px;background:#9aec9a"></div>
<div class="t" style="left:546px;top:495px;letter-spacing:-0.35px;color:#000">0.01</div>
<div style="left:618px;top:493px;width:71px;height:19px;background:#9aec9a"></div>
<div class="t" style="left:620px;top:495px;letter-spacing:-0.35px;color:#000">0.02</div>
<div style="left:692px;top:493px;width:72px;height:19px;background:#9aec9a"></div>
<div class="t" style="left:694px;top:495px;letter-spacing:-0.35px;color:#000">0.08</div>
<div style="left:767px;top:493px;width:71px;height:19px;background:#9aec9a"></div>
<div class="t" style="left:769px;top:495px;letter-spacing:-0.35px;color:#000">0.00</div>
<div style="left:841px;top:493px;width:71px;height:19px;background:#9aec9a"></div>
<div class="t" style="left:843px;top:495px;letter-spacing:-0.35px;color:#000">0.00</div>
<div style="left:915px;top:493px;width:71px;height:19px;background:#9aec9a"></div>
<div class="t" style="left:917px;top:495px;letter-spacing:-0.35px;color:#000">0.10</div>
<div style="left:989px;top:493px;width:72px;height:19px;background:#9aec9a"></div>
<div class="t" style="left:991px;top:495px;letter-spacing:-0.35px;color:#000">0.00</div>
<div style="left:1064px;top:493px;width:71px;height:19px;background:#9aec9a"></div>
<div class="t" style="left:1066px;top:495px;letter-spacing:-0.35px;color:#000">0.10</div>
<div style="left:394px;top:513px;width:742px;height:1px;background:#d6d6d6"></div>
<div class="t" style="left:397px;top:517px;width:142px;overflow:hidden;letter-spacing:-0.2px;color:#000">bm18 ([76.72; 13.73; 7.35] - 300302..100x10FB)</div>
<div style="left:544px;top:515px;width:71px;height:19px;background:#9aec9a"></div>
<div class="t" style="left:546px;top:517px;letter-spacing:-0.35px;color:#000">0.01</div>
<div style="left:618px;top:515px;width:71px;height:19px;background:#9aec9a"></div>
<div class="t" style="left:620px;top:517px;letter-spacing:-0.35px;color:#000">0.03</div>
<div style="left:692px;top:515px;width:72px;height:19px;background:#9aec9a"></div>
<div class="t" style="left:694px;top:517px;letter-spacing:-0.35px;color:#000">0.08</div>
<div style="left:767px;top:515px;width:71px;height:19px;background:#9aec9a"></div>
<div class="t" style="left:769px;top:517px;letter-spacing:-0.35px;color:#000">0.00</div>
<div style="left:841px;top:515px;width:71px;height:19px;background:#9aec9a"></div>
<div class="t" style="left:843px;top:517px;letter-spacing:-0.35px;color:#000">0.00</div>
<div style="left:915px;top:515px;width:71px;height:19px;background:#9aec9a"></div>
<div class="t" style="left:917px;top:517px;letter-spacing:-0.35px;color:#000">0.11</div>
<div style="left:989px;top:515px;width:72px;height:19px;background:#9aec9a"></div>
<div class="t" style="left:991px;top:517px;letter-spacing:-0.35px;color:#000">0.00</div>
<div style="left:1064px;top:515px;width:71px;height:19px;background:#9aec9a"></div>
<div class="t" style="left:1066px;top:517px;letter-spacing:-0.35px;color:#000">0.11</div>
<div style="left:394px;top:535px;width:742px;height:1px;background:#d6d6d6"></div>
<div class="t" style="left:397px;top:539px;width:142px;overflow:hidden;letter-spacing:-0.2px;color:#000">bm19 ([76.72; 12.07; 9.97] - 300302..100x10FB)</div>
<div style="left:544px;top:537px;width:71px;height:19px;background:#9aec9a"></div>
<div class="t" style="left:546px;top:539px;letter-spacing:-0.35px;color:#000">0.31</div>
<div style="left:618px;top:537px;width:71px;height:19px;background:#9aec9a"></div>
<div class="t" style="left:620px;top:539px;letter-spacing:-0.35px;color:#000">0.48</div>
<div style="left:692px;top:537px;width:72px;height:19px;background:#9aec9a"></div>
<div class="t" style="left:694px;top:539px;letter-spacing:-0.35px;color:#000">0.59</div>
<div style="left:767px;top:537px;width:71px;height:19px;background:#9aec9a"></div>
<div class="t" style="left:769px;top:539px;letter-spacing:-0.35px;color:#000">0.01</div>
<div style="left:841px;top:537px;width:71px;height:19px;background:#9aec9a"></div>
<div class="t" style="left:843px;top:539px;letter-spacing:-0.35px;color:#000">0.00</div>
<div style="left:915px;top:537px;width:71px;height:19px;background:#fdab9d"></div>
<div class="t" style="left:917px;top:539px;letter-spacing:-0.35px;color:#000">1.27</div>
<div style="left:989px;top:537px;width:72px;height:19px;background:#9aec9a"></div>
<div class="t" style="left:991px;top:539px;letter-spacing:-0.35px;color:#000">0.00</div>
<div style="left:1064px;top:537px;width:71px;height:19px;background:#fdab9d"></div>
<div class="t" style="left:1066px;top:539px;letter-spacing:-0.35px;color:#000">1.27</div>
<div style="left:394px;top:557px;width:742px;height:1px;background:#d6d6d6"></div>
<div class="t" style="left:397px;top:561px;width:142px;overflow:hidden;letter-spacing:-0.2px;color:#000">bm20 ([76.72; 13.73; 9.97] - 300302..100x10FB)</div>
<div style="left:544px;top:559px;width:71px;height:19px;background:#9aec9a"></div>
<div class="t" style="left:546px;top:561px;letter-spacing:-0.35px;color:#000">0.04</div>
<div style="left:618px;top:559px;width:71px;height:19px;background:#9aec9a"></div>
<div class="t" style="left:620px;top:561px;letter-spacing:-0.35px;color:#000">0.15</div>
<div style="left:692px;top:559px;width:72px;height:19px;background:#9aec9a"></div>
<div class="t" style="left:694px;top:561px;letter-spacing:-0.35px;color:#000">0.09</div>
<div style="left:767px;top:559px;width:71px;height:19px;background:#9aec9a"></div>
<div class="t" style="left:769px;top:561px;letter-spacing:-0.35px;color:#000">0.01</div>
<div style="left:841px;top:559px;width:71px;height:19px;background:#9aec9a"></div>
<div class="t" style="left:843px;top:561px;letter-spacing:-0.35px;color:#000">0.00</div>
<div style="left:915px;top:559px;width:71px;height:19px;background:#9aec9a"></div>
<div class="t" style="left:917px;top:561px;letter-spacing:-0.35px;color:#000">0.25</div>
<div style="left:989px;top:559px;width:72px;height:19px;background:#9aec9a"></div>
<div class="t" style="left:991px;top:561px;letter-spacing:-0.35px;color:#000">0.00</div>
<div style="left:1064px;top:559px;width:71px;height:19px;background:#9aec9a"></div>
<div class="t" style="left:1066px;top:561px;letter-spacing:-0.35px;color:#000">0.25</div>
<div style="left:394px;top:579px;width:742px;height:1px;background:#d6d6d6"></div>
<div class="t" style="left:397px;top:583px;width:142px;overflow:hidden;letter-spacing:-0.2px;color:#000">bm21 ([76.72; 12.90; 14.05] - 300302..100x10FB)</div>
<div style="left:544px;top:581px;width:71px;height:19px;background:#9aec9a"></div>
<div class="t" style="left:546px;top:583px;letter-spacing:-0.35px;color:#000">0.78</div>
<div style="left:618px;top:581px;width:71px;height:19px;background:#fdab9d"></div>
<div class="t" style="left:620px;top:583px;letter-spacing:-0.35px;color:#000">1.64</div>
<div style="left:692px;top:581px;width:72px;height:19px;background:#9aec9a"></div>
<div class="t" style="left:694px;top:583px;letter-spacing:-0.35px;color:#000">0.91</div>
<div style="left:767px;top:581px;width:71px;height:19px;background:#9aec9a"></div>
<div class="t" style="left:769px;top:583px;letter-spacing:-0.35px;color:#000">0.12</div>
<div style="left:841px;top:581px;width:71px;height:19px;background:#9aec9a"></div>
<div class="t" style="left:843px;top:583px;letter-spacing:-0.35px;color:#000">0.00</div>
<div style="left:915px;top:581px;width:71px;height:19px;background:#fdab9d"></div>
<div class="t" style="left:917px;top:583px;letter-spacing:-0.35px;color:#000">3.05</div>
<div style="left:989px;top:581px;width:72px;height:19px;background:#9aec9a"></div>
<div class="t" style="left:991px;top:583px;letter-spacing:-0.35px;color:#000">0.00</div>
<div style="left:1064px;top:581px;width:71px;height:19px;background:#fdab9d"></div>
<div class="t" style="left:1066px;top:583px;letter-spacing:-0.35px;color:#000">3.05</div>
<div style="left:394px;top:601px;width:742px;height:1px;background:#d6d6d6"></div>
<div class="t" style="left:397px;top:605px;width:142px;overflow:hidden;letter-spacing:-0.2px;color:#000">bm22 ([76.72; 12.90; 12.55] - 300302..100x10FB)</div>
<div style="left:544px;top:603px;width:71px;height:19px;background:#9aec9a"></div>
<div class="t" style="left:546px;top:605px;letter-spacing:-0.35px;color:#000">0.85</div>
<div style="left:618px;top:603px;width:71px;height:19px;background:#9aec9a"></div>
<div class="t" style="left:620px;top:605px;letter-spacing:-0.35px;color:#000">0.81</div>
<div style="left:692px;top:603px;width:72px;height:19px;background:#9aec9a"></div>
<div class="t" style="left:694px;top:605px;letter-spacing:-0.35px;color:#000">0.45</div>
<div style="left:767px;top:603px;width:71px;height:19px;background:#9aec9a"></div>
<div class="t" style="left:769px;top:605px;letter-spacing:-0.35px;color:#000">0.08</div>
<div style="left:841px;top:603px;width:71px;height:19px;background:#9aec9a"></div>
<div class="t" style="left:843px;top:605px;letter-spacing:-0.35px;color:#000">0.00</div>
<div style="left:915px;top:603px;width:71px;height:19px;background:#fdab9d"></div>
<div class="t" style="left:917px;top:605px;letter-spacing:-0.35px;color:#000">1.32</div>
<div style="left:989px;top:603px;width:72px;height:19px;background:#9aec9a"></div>
<div class="t" style="left:991px;top:605px;letter-spacing:-0.35px;color:#000">0.00</div>
<div style="left:1064px;top:603px;width:71px;height:19px;background:#fdab9d"></div>
<div class="t" style="left:1066px;top:605px;letter-spacing:-0.35px;color:#000">1.32</div>
<div style="left:394px;top:623px;width:742px;height:1px;background:#d6d6d6"></div>
<div class="t" style="left:397px;top:627px;width:142px;overflow:hidden;letter-spacing:-0.2px;color:#000">bm23 ([76.72; 12.90; 4.60] - 300302..100x10FB)</div>
<div style="left:544px;top:625px;width:71px;height:19px;background:#9aec9a"></div>
<div class="t" style="left:546px;top:627px;letter-spacing:-0.35px;color:#000">0.15</div>
<div style="left:618px;top:625px;width:71px;height:19px;background:#9aec9a"></div>
<div class="t" style="left:620px;top:627px;letter-spacing:-0.35px;color:#000">0.10</div>
<div style="left:692px;top:625px;width:72px;height:19px;background:#9aec9a"></div>
<div class="t" style="left:694px;top:627px;letter-spacing:-0.35px;color:#000">0.26</div>
<div style="left:767px;top:625px;width:71px;height:19px;background:#9aec9a"></div>
<div class="t" style="left:769px;top:627px;letter-spacing:-0.35px;color:#000">0.01</div>
<div style="left:841px;top:625px;width:71px;height:19px;background:#9aec9a"></div>
<div class="t" style="left:843px;top:627px;letter-spacing:-0.35px;color:#000">0.00</div>
<div style="left:915px;top:625px;width:71px;height:19px;background:#9aec9a"></div>
<div class="t" style="left:917px;top:627px;letter-spacing:-0.35px;color:#000">0.40</div>
<div style="left:989px;top:625px;width:72px;height:19px;background:#9aec9a"></div>
<div class="t" style="left:991px;top:627px;letter-spacing:-0.35px;color:#000">0.00</div>
<div style="left:1064px;top:625px;width:71px;height:19px;background:#9aec9a"></div>
<div class="t" style="left:1066px;top:627px;letter-spacing:-0.35px;color:#000">0.40</div>
<div style="left:394px;top:645px;width:742px;height:1px;background:#d6d6d6"></div>
<div class="t" style="left:397px;top:649px;width:142px;overflow:hidden;letter-spacing:-0.2px;color:#000">bm24 ([76.72; 12.90; 8.44] - 300302..100x10FB)</div>
<div style="left:544px;top:647px;width:71px;height:19px;background:#9aec9a"></div>
<div class="t" style="left:546px;top:649px;letter-spacing:-0.35px;color:#000">0.08</div>
<div style="left:618px;top:647px;width:71px;height:19px;background:#9aec9a"></div>
<div class="t" style="left:620px;top:649px;letter-spacing:-0.35px;color:#000">0.13</div>
<div style="left:692px;top:647px;width:72px;height:19px;background:#9aec9a"></div>
<div class="t" style="left:694px;top:649px;letter-spacing:-0.35px;color:#000">0.06</div>
<div style="left:767px;top:647px;width:71px;height:19px;background:#9aec9a"></div>
<div class="t" style="left:769px;top:649px;letter-spacing:-0.35px;color:#000">0.01</div>
<div style="left:841px;top:647px;width:71px;height:19px;background:#9aec9a"></div>
<div class="t" style="left:843px;top:649px;letter-spacing:-0.35px;color:#000">0.00</div>
<div style="left:915px;top:647px;width:71px;height:19px;background:#9aec9a"></div>
<div class="t" style="left:917px;top:649px;letter-spacing:-0.35px;color:#000">0.21</div>
<div style="left:989px;top:647px;width:72px;height:19px;background:#9aec9a"></div>
<div class="t" style="left:991px;top:649px;letter-spacing:-0.35px;color:#000">0.00</div>
<div style="left:1064px;top:647px;width:71px;height:19px;background:#9aec9a"></div>
<div class="t" style="left:1066px;top:649px;letter-spacing:-0.35px;color:#000">0.21</div>
<div style="left:542px;top:140px;width:1px;height:528px;background:#d6d6d6"></div>
<div style="left:616px;top:140px;width:1px;height:528px;background:#d6d6d6"></div>
<div style="left:690px;top:140px;width:1px;height:528px;background:#d6d6d6"></div>
<div style="left:765px;top:140px;width:1px;height:528px;background:#d6d6d6"></div>
<div style="left:839px;top:140px;width:1px;height:528px;background:#d6d6d6"></div>
<div style="left:913px;top:140px;width:1px;height:528px;background:#d6d6d6"></div>
<div style="left:987px;top:140px;width:1px;height:528px;background:#d6d6d6"></div>
<div style="left:1062px;top:140px;width:1px;height:528px;background:#d6d6d6"></div>
<div style="left:1136px;top:140px;width:18px;height:528px;background:#f0f0f0"></div>
<div style="left:1136px;top:157px;width:18px;height:112px;background:#cdcdcd"></div>
<svg style="left:1137px;top:140px" width="17" height="17"><path d="M5 11 L8.5 7.5 L12 11" stroke="#8a8a8a" stroke-width="1.3" fill="none"/></svg>
<svg style="left:1137px;top:651px" width="17" height="17"><path d="M5 6.5 L8.5 10 L12 6.5" stroke="#8a8a8a" stroke-width="1.3" fill="none"/></svg>
<div style="left:394px;top:668px;width:760px;height:1px;background:#7393bb"></div>
<div style="left:394px;top:669px;width:760px;height:22px;background:#f0f0f0"></div>
<div class="t" style="left:397px;top:674px;">Displaying 106 of 106 rows and 9 of 9 columns</div>
<svg style="left:1135px;top:671px" width="18" height="18"><path d="M1.5 1.5H12.5L8.5 7.5V16.5L5.5 15V7.5Z" fill="none" stroke="#d0d0d0"/><path d="M11.5 11.5L15 15M15 11.5L11.5 15" stroke="#d8d8d8"/></svg>
<div style="left:1161px;top:82px;width:24px;height:24px;background:#e1e1e1;border:1px solid #6d6d6d;box-sizing:border-box"></div>
<svg style="left:1161px;top:82px" width="24" height="24"><path d="M4.8 12.5H7M18 12.5H20.2" stroke="#000" stroke-width="1"/><rect x="7.5" y="7.5" width="10" height="10" fill="#000" stroke="#ff6a10" stroke-width="1"/><path d="M11.2 10.2L12.8 9.2V15.6M11.3 15.6H14.2" stroke="#ff7a1a" stroke-width="1.1" fill="none"/></svg>
<div style="left:1161px;top:112px;width:24px;height:24px;background:#e1e1e1;border:1px solid #6d6d6d;box-sizing:border-box"></div>
<svg style="left:1161px;top:112px" width="24" height="24"><rect x="5" y="6" width="13" height="13" fill="#111"/><path d="M6.5 8.3h2.6M10.2 8.3h2.6M13.9 8.3h2.6" stroke="#5ac8e8" stroke-width="1.6"/><path d="M6.5 11.3h2.6M10.2 11.3h2.6M13.9 11.3h2.6M6.5 14.3h2.6M10.2 14.3h2.6M13.9 14.3h2.6M6.5 17.2h2.6M10.2 17.2h2.6M13.9 17.2h2.6" stroke="#fff" stroke-width="1.5"/></svg>
<div style="left:1161px;top:667px;width:24px;height:24px;background:#e1e1e1;border:1px solid #6d6d6d;box-sizing:border-box"></div>
<svg style="left:1161px;top:667px" width="24" height="24"><rect x="6.5" y="5.5" width="10" height="13" fill="#e8e8e8" stroke="#333" stroke-width="1"/><rect x="8.6" y="7.6" width="5.8" height="2" fill="#f4f4f4" stroke="#333" stroke-width="0.9"/><path d="M8.5 12.4h1M10.5 12.4h1M8.5 14.4h1M10.5 14.4h1M8.5 16.4h1M10.5 16.4h1" stroke="#333" stroke-width="1"/><rect x="12" y="11" width="8" height="9" fill="#0a8a0a"/><rect x="15" y="12.2" width="2" height="1.6" fill="#fff"/><rect x="15" y="15" width="2" height="4" fill="#fff"/></svg>
<div style="left:1038px;top:707px;width:75px;height:24px;background:#e1e1e1;border:1px solid #707070;box-sizing:border-box"></div>
<div class="t" style="left:1038px;top:713px;width:75px;text-align:center;">OK</div>
<div style="left:1119px;top:707px;width:75px;height:24px;background:#e1e1e1;border:1px solid #707070;box-sizing:border-box"></div>
<div class="t" style="left:1119px;top:713px;width:75px;text-align:center;">Cancel</div>
</body></html>
